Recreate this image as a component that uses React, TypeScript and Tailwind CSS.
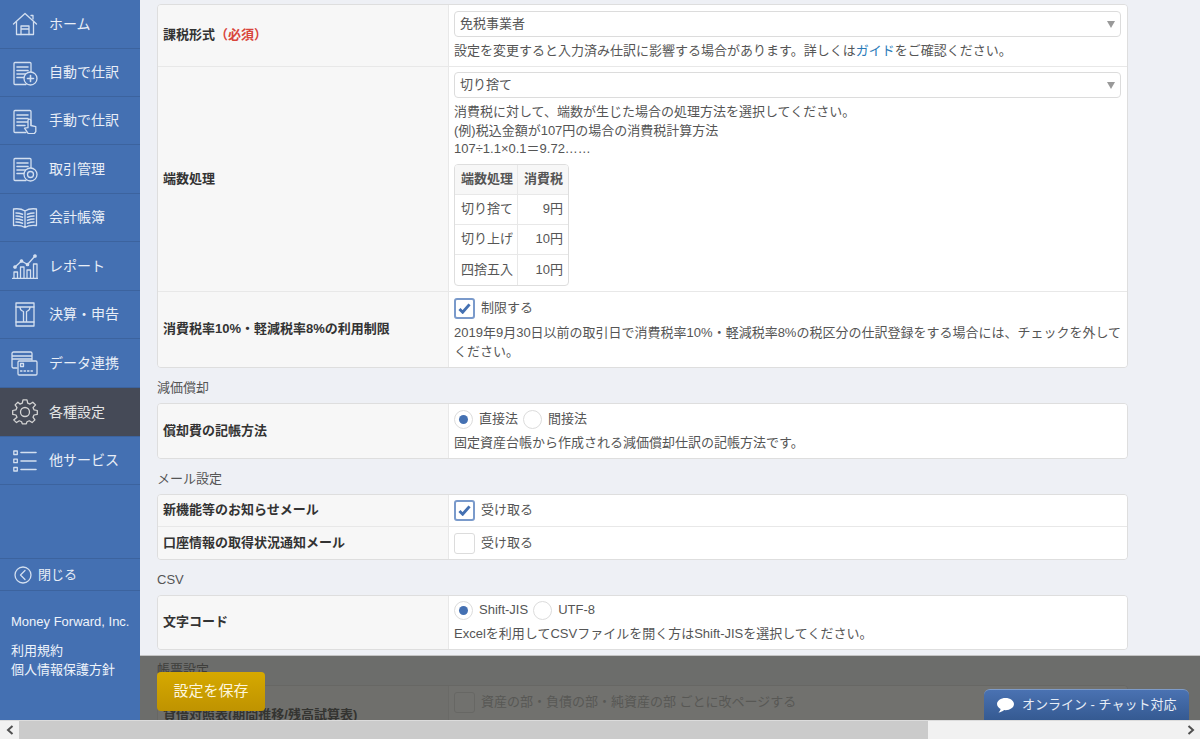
import type { ReactNode } from "react";

const base = { fill: "none", stroke: "currentColor", strokeWidth: 1.3, strokeLinecap: "round" as const, strokeLinejoin: "round" as const };

const DocLines = () => (
  <>
    <path d="M20 18V3.5a1 1 0 0 0-1-1H4a1 1 0 0 0-1 1v20a1 1 0 0 0 1 1h11" />
    <path d="M6 7h11M6 10.5h11M6 14h11M6 17.5h8" strokeWidth={1.6} />
  </>
);

const icons: Record<string, ReactNode> = {
  home: (
    <svg viewBox="0 0 26 24" className="w-[26px] h-[24px]" {...base}>
      <path d="M1.5 12 13 1.5 24.5 12" />
      <path d="M4.5 10v12.5h17V10" />
      <path d="M9 22.5V14h8v8.5M9 17h8" />
      <path d="M19 3.5h2v3.5" />
    </svg>
  ),
  auto: (
    <svg viewBox="0 0 27 26" className="w-[27px] h-[26px]" {...base}>
      <DocLines />
      <circle cx="19.5" cy="18.5" r="6.5" fill="#4470b2" />
      <path d="M19.5 15.5v6M16.5 18.5h6" strokeWidth={1.6} />
    </svg>
  ),
  manual: (
    <svg viewBox="0 0 27 26" className="w-[27px] h-[26px]" {...base}>
      <DocLines />
      <path d="M17 12.500a1.400 1.400 0 0 1 2.800 0v5l5 1.200v5l-1.500 2h-6l-3.800-5.500 3.500-.5z" fill="#4470b2" />
    </svg>
  ),
  deals: (
    <svg viewBox="0 0 27 26" className="w-[27px] h-[26px]" {...base}>
      <DocLines />
      <circle cx="19.5" cy="18.5" r="6.5" fill="#4470b2" />
      <circle cx="19.5" cy="18.5" r="3" />
    </svg>
  ),
  book: (
    <svg viewBox="0 0 26 22" className="w-[26px] h-[22px]" {...base}>
      <path d="M13 4C10 2 5 1.500 1.500 2v16.500c4-.5 8.500 0 11.500 2 3-2 7.500-2.500 11.500-2V2C21 1.500 16 2 13 4zM13 4v16.500" />
      <path d="M4 6c2 0 4 .3 6.500 1.200M4 9c2 0 4 .3 6.500 1.200M4 12c2 0 4 .3 6.500 1.200M4 15c2 0 4 .3 6.500 1.200M22 6c-2 0-4 .3-6.500 1.200M22 9c-2 0-4 .3-6.500 1.200M22 12c-2 0-4 .3-6.500 1.200M22 15c-2 0-4 .3-6.500 1.200" strokeWidth={1.5} />
    </svg>
  ),
  report: (
    <svg viewBox="0 0 26 26" className="w-[26px] h-[26px]" {...base}>
      <path d="M.5 25.500h25" />
      <path d="M2 25v-6h3.500v6M8.500 25V14H12v11M15 25v-8h3.500v8M21.500 25V11H25v14" />
      <path d="M3 14l6.500-6 6 3.500L23 3" />
      <circle cx="3" cy="14" r="1.200" fill="currentColor" />
      <circle cx="9.500" cy="8" r="1.200" fill="currentColor" />
      <circle cx="15.500" cy="11.500" r="1.200" fill="currentColor" />
      <circle cx="23" cy="3" r="1.200" fill="currentColor" />
    </svg>
  ),
  closing: (
    <svg viewBox="0 0 20 25" className="w-[20px] h-[25px]" {...base}>
      <rect x="1" y="1" width="18" height="23" />
      <path d="M1 5h18M1 20h18M5 5c0 3 2 4 3.500 4.500V20M15 5c0 3-2 4-3.500 4.500V20" />
    </svg>
  ),
  data: (
    <svg viewBox="0 0 27 25" className="w-[27px] h-[25px]" {...base}>
      <path d="M6 17H2.500a1.500 1.500 0 0 1-1.500-1.500v-13A1.500 1.500 0 0 1 2.500 1h17A1.500 1.500 0 0 1 21 2.500V9M1 5h20M1 8h20" />
      <rect x="7" y="10" width="19" height="14" rx="1.200" />
      <rect x="9.500" y="12.500" width="3" height="3" />
      <path d="M9.500 20h1.500M13 20h1.500M16.500 20H18M20 20h1.500" />
    </svg>
  ),
  settings: (
    <svg viewBox="0 0 26 26" className="w-[26px] h-[26px]" {...base}>
      <circle cx="13" cy="13" r="4.500" />
      <path d="M11 1.500h4l.7 3.300 2.300 1 2.800-1.900 2.800 2.800L21 9.500l1 2.300 3.300.7v4l-3.300.7-1 2.300 1.900 2.800-2.800 2.800-2.800-1.900-2.300 1-.7 2.300h-4l-.7-2.300-2.300-1-2.800 1.900-2.800-2.800L5 19.500l-1-2.300-3.300-.7v-4l3.300-.7 1-2.300-1.900-2.800 2.800-2.800L8 5.800l2.300-1z" transform="translate(0 -.5) scale(1 .96)" />
    </svg>
  ),
  others: (
    <svg viewBox="0 0 24 22" className="w-[24px] h-[22px]" {...base}>
      <rect x=".8" y="1" width="3.500" height="3.500" />
      <rect x=".8" y="9.200" width="3.500" height="3.500" />
      <rect x=".8" y="17.500" width="3.500" height="3.500" />
      <path d="M8 2.500h15M8 11h15M8 19.500h15" strokeWidth={1.6} />
    </svg>
  ),
};

const menu = [
  { key: "home", label: "ホーム", h: "h-[49px]" },
  { key: "auto", label: "自動で仕訳", h: "h-[48px]" },
  { key: "manual", label: "手動で仕訳", h: "h-[48px]" },
  { key: "deals", label: "取引管理", h: "h-[49px]" },
  { key: "book", label: "会計帳簿", h: "h-[48px]" },
  { key: "report", label: "レポート", h: "h-[49px]" },
  { key: "closing", label: "決算・申告", h: "h-[48px]" },
  { key: "data", label: "データ連携", h: "h-[49px]" },
  { key: "settings", label: "各種設定", h: "h-[49px]", active: true },
  { key: "others", label: "他サービス", h: "h-[48px]" },
];

const Sidebar = () => (
  <aside className="w-[140px] shrink-0 h-full bg-[#4470b2] flex flex-col text-[#e8eef7]">
    {menu.map((m) => (
      <div
        key={m.key}
        className={`${m.h} flex items-center border-b border-[#3c639e] ${m.active ? "bg-[#454a57] text-[#e6e6e6]" : ""}`}
      >
        <span className={`w-[49px] shrink-0 flex items-center justify-center ${m.active ? "text-[#d4d4d4]" : "text-[#d3dff0]"}`}>
          {icons[m.key]}
        </span>
        <span className="text-[14px]">{m.label}</span>
      </div>
    ))}
    <div className="mt-auto h-[33px] flex items-center border-y border-[#3c639e] pl-[14px] gap-[6px] text-[13px]">
      <svg viewBox="0 0 18 18" className="w-[18px] h-[18px] text-[#d3dff0]" {...base}>
        <circle cx="9" cy="9" r="8" />
        <path d="M11 4.500 6.500 9l4.500 4.500" />
      </svg>
      閉じる
    </div>
    <div className="pl-[11px] pt-[21px] pb-[41px] text-[13px] text-[#eef3fa] leading-[19px]">
      <p className="mb-[10px] whitespace-nowrap">Money Forward, Inc.</p>
      <p>利用規約</p>
      <p>個人情報保護方針</p>
    </div>
  </aside>
);

const Row = ({ label, children, className = "" }: { label: ReactNode; children: ReactNode; className?: string }) => (
  <div className={`flex border-b border-[#e8e8e8] last:border-b-0 ${className}`}>
    <div className="w-[291px] shrink-0 bg-[#f7f7f7] border-r border-[#e8e8e8] flex items-center pl-[5px] font-bold text-[#333]">
      {label}
    </div>
    <div className="flex-1 min-w-0 bg-white pl-[5px] pr-[6px]">{children}</div>
  </div>
);

const Select = ({ value }: { value: string }) => (
  <div className="h-[26px] border border-[#dcdcdc] rounded-[4px] bg-white flex items-center justify-between pl-[5px] pr-[5px] text-[#555]">
    {value}
    <span className="w-0 h-0 border-x-[4px] border-x-transparent border-t-[7px] border-t-[#999]" />
  </div>
);

const Check = ({ on, label }: { on?: boolean; label: string }) => (
  <div className="flex items-center gap-[6px]">
    <span
      className={`w-[21px] h-[21px] rounded-[3px] flex items-center justify-center bg-white ${on ? "border-2 border-[#7a9acb]" : "border border-[#dcdcdc]"}`}
    >
      {on && (
        <svg viewBox="0 0 14 12" className="w-[13px] h-[11px]">
          <path d="M1.500 6.500 5 10l7.500-8.500" fill="none" stroke="#4470b2" strokeWidth="3.200" />
        </svg>
      )}
    </span>
    {label}
  </div>
);

const Radio = ({ on, label }: { on?: boolean; label: string }) => (
  <span className="flex items-center gap-[6px]">
    <span className="w-[19px] h-[19px] rounded-full border border-[#dcdcdc] bg-white flex items-center justify-center">
      {on && <span className="w-[9px] h-[9px] rounded-full bg-[#4470b2]" />}
    </span>
    {label}
  </span>
);

const Card = ({ children }: { children: ReactNode }) => (
  <div className="w-[971px] border border-[#dedede] rounded-[4px] overflow-hidden">{children}</div>
);

const Heading = ({ children }: { children: ReactNode }) => (
  <h3 className="text-[13px] leading-[18px] text-[#555] mt-[11px] mb-[6px]">{children}</h3>
);

const roundingRows = [
  ["切り捨て", "9円"],
  ["切り上げ", "10円"],
  ["四捨五入", "10円"],
];

const Settings = () => (
  <div className="pl-[17px] pt-[4px] text-[13px] leading-[18.500px] text-[#555]">
    <Card>
      <Row label={<span>課税形式<span className="text-[#d9453c]">（必須）</span></span>}>
        <div className="pt-[6px] pb-[5px]">
          <Select value="免税事業者" />
          <p className="mt-[5px]">
            設定を変更すると入力済み仕訳に影響する場合があります。詳しくは<span className="text-[#2a7ab8]">ガイド</span>をご確認ください。
          </p>
        </div>
      </Row>
      <Row label="端数処理">
        <div className="pt-[5.500px] pb-[5px]">
          <Select value="切り捨て" />
          <p className="mt-[5px]">消費税に対して、端数が生じた場合の処理方法を選択してください。</p>
          <p>(例)税込金額が107円の場合の消費税計算方法</p>
          <p>107÷1.1×0.1＝9.72……</p>
          <div className="mt-[5.500px] w-[115px] border border-[#dedede] rounded-[4px] overflow-hidden">
            <div className="flex h-[30px] items-center bg-[#f7f7f7] border-b border-[#e8e8e8] font-bold">
              <span className="w-[63px] h-full flex items-center pl-[6px] border-r border-[#e8e8e8]">端数処理</span>
              <span className="flex-1 text-right pr-[5px]">消費税</span>
            </div>
            {roundingRows.map(([a, b]) => (
              <div key={a} className="flex h-[30px] items-center border-b border-[#e8e8e8] last:border-b-0">
                <span className="w-[63px] h-full flex items-center pl-[6px] border-r border-[#e8e8e8]">{a}</span>
                <span className="flex-1 text-right pr-[5px]">{b}</span>
              </div>
            ))}
          </div>
        </div>
      </Row>
      <Row label="消費税率10%・軽減税率8%の利用制限">
        <div className="pt-[6px] pb-[6px]">
          <Check on label="制限する" />
          <p className="mt-[5px] -mr-[6px]">
            2019年9月30日以前の取引日で消費税率10%・軽減税率8%の税区分の仕訳登録をする場合には、チェックを外してください。
          </p>
        </div>
      </Row>
    </Card>

    <Heading>減価償却</Heading>
    <Card>
      <Row label="償却費の記帳方法">
        <div className="pt-[5.500px] pb-[5.500px]">
          <div className="flex gap-[5px]">
            <Radio on label="直接法" />
            <Radio label="間接法" />
          </div>
          <p className="mt-[5px]">固定資産台帳から作成される減価償却仕訳の記帳方法です。</p>
        </div>
      </Row>
    </Card>

    <Heading>メール設定</Heading>
    <Card>
      <Row label="新機能等のお知らせメール">
        <div className="py-[5px]">
          <Check on label="受け取る" />
        </div>
      </Row>
      <Row label={<span className="block pt-[1px]">口座情報の取得状況通知メール</span>}>
        <div className="pt-[6px] pb-[5px]">
          <Check label="受け取る" />
        </div>
      </Row>
    </Card>

    <Heading>CSV</Heading>
    <Card>
      <Row label="文字コード">
        <div className="pt-[5.500px] pb-[5.500px]">
          <div className="flex gap-[5px]">
            <Radio on label="Shift-JIS" />
            <Radio label="UTF-8" />
          </div>
          <p className="mt-[5px]">Excelを利用してCSVファイルを開く方はShift-JISを選択してください。</p>
        </div>
      </Row>
    </Card>

    <Heading>帳票設定</Heading>
    <Card>
      <Row label="貸借対照表(期間推移/残高試算表)">
        <div className="pt-[6px] h-[58px] text-[#aaa]">
          <Check label="資産の部・負債の部・純資産の部 ごとに改ページする" />
        </div>
      </Row>
    </Card>
  </div>
);

export default function App() {
  return (
    <div className="w-[1200px] h-[739px] overflow-hidden flex flex-col bg-[#eef0f5] font-['Liberation_Sans','Noto_Sans_CJK_JP',sans-serif]">
      <div className="flex-1 min-h-0 flex">
        <Sidebar />
        <main className="relative flex-1 min-w-0 overflow-hidden">
          <Settings />
          <div className="absolute left-0 right-0 bottom-0 h-[65px] border-t border-[#c4c4c4] bg-[rgba(53,53,49,0.7)]">
            <button className="absolute left-[17px] top-[16px] w-[108px] h-[39px] rounded-[4px] bg-gradient-to-b from-[#d6a900] to-[#bf9300] text-[#fdf6dd] text-[15px]">
              設定を保存
            </button>
            <div className="absolute left-[844px] bottom-0 w-[205px] h-[31px] rounded-t-[6px] bg-gradient-to-b from-[#4a72b2] to-[#355a92] border-t border-[#7d9bc9] flex items-center pl-[12px] gap-[7px] text-[13px] text-[#e8eef7]">
              <svg viewBox="0 0 20 17" className="w-[19px] h-[16px]">
                <path d="M10 1c5 0 9 2.800 9 6.500S15 14 10 14l-1.500-.1C7 15.300 5 16.200 2.500 16.500c1.200-1 2-2.300 2.300-3.700C2.500 11.600 1 9.700 1 7.500 1 3.800 5 1 10 1z" fill="#fff" />
              </svg>
              オンライン - チャット対応
            </div>
          </div>
        </main>
      </div>
      <div className="h-[19px] shrink-0 flex bg-[#f1f1f1] border-t border-[#dcdcdc]">
        <span className="w-[19px] flex items-center justify-center bg-[#f1f1f1]">
          <svg viewBox="0 0 8 10" className="w-[8px] h-[10px]"><path d="M6.500 1 2 5l4.500 4" fill="none" stroke="#505050" strokeWidth="2" /></svg>
        </span>
        <span className="w-[909px] bg-[#cbcbcb]" />
        <span className="ml-auto w-[19px] flex items-center justify-center">
          <svg viewBox="0 0 8 10" className="w-[8px] h-[10px]"><path d="M1.500 1 6 5 1.500 9" fill="none" stroke="#505050" strokeWidth="2" /></svg>
        </span>
      </div>
    </div>
  );
}
